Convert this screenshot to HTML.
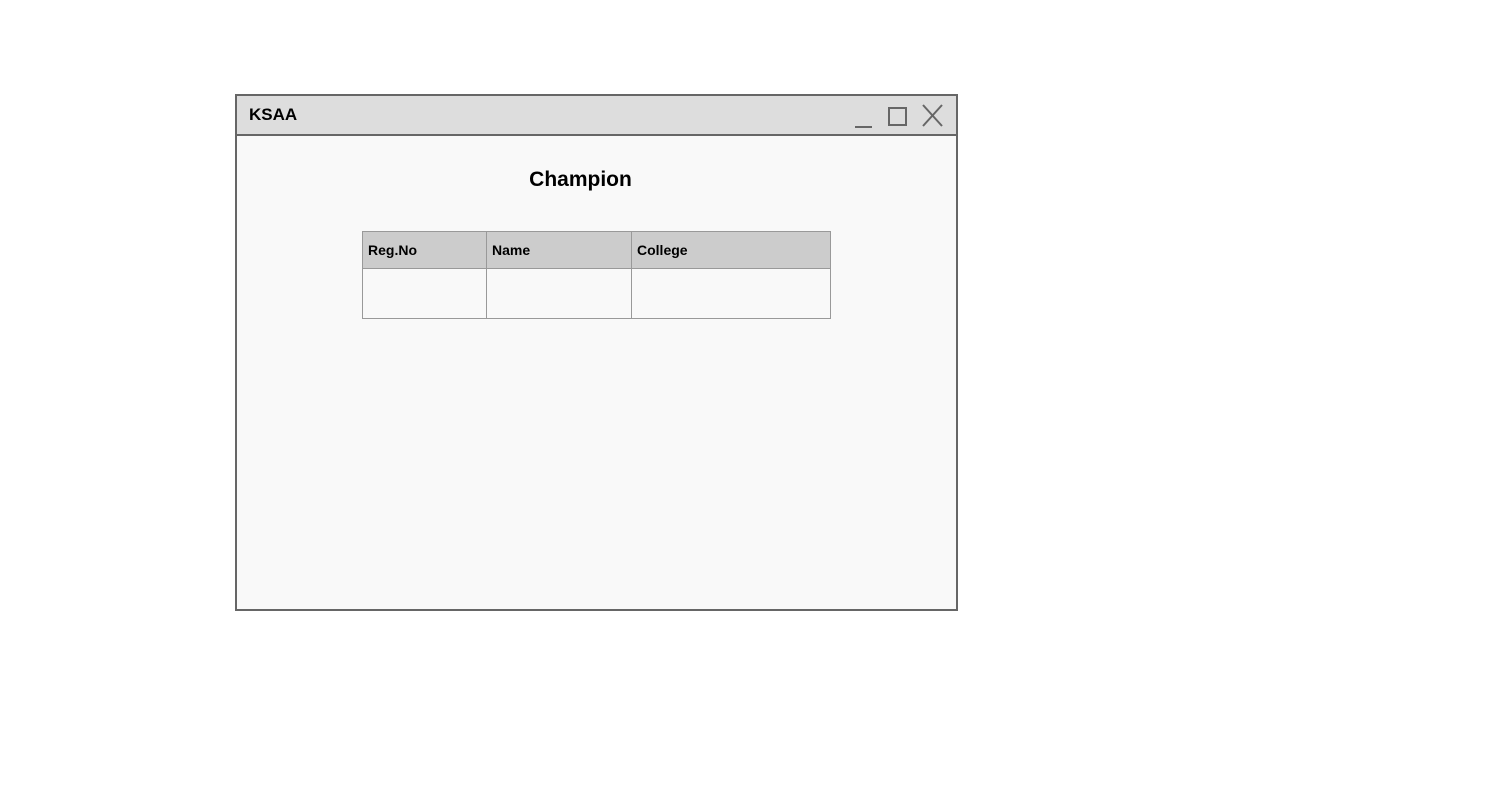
<!DOCTYPE html>
<html><head><style>
body{margin:0;width:1500px;height:800px;background:#fff;position:relative;font-family:"Liberation Sans",sans-serif;overflow:hidden}
.win{position:absolute;left:235px;top:94px;width:719px;height:513px;border:2px solid #666;background:#f9f9f9}
.tb{position:absolute;left:0;top:0;width:719px;height:38px;background:#ddd;border-bottom:2px solid #666}
.tt{position:absolute;left:12px;top:9px;font-weight:bold;font-size:17px;color:#000}
.h{position:absolute;left:0;top:72px;width:719px;text-align:center;font-weight:bold;font-size:21px;margin-left:-16px}
table{position:absolute;left:125px;top:135px;border-collapse:collapse}
td{border:1px solid #999;padding:0 5px;font-size:14px;font-weight:bold;vertical-align:middle}
tr.hd td{background:#ccc;height:36px}
tr.bd td{height:49px}
</style></head><body>
<div class="win">
<div class="tb"><div class="tt">KSAA</div>
<svg style="position:absolute;left:608px;top:3px" width="110" height="34">
<line x1="10" y1="28" x2="27" y2="28" stroke="#666" stroke-width="2"/>
<rect x="44" y="9" width="17" height="17" fill="none" stroke="#666" stroke-width="2"/>
<line x1="78" y1="6" x2="97" y2="27" stroke="#666" stroke-width="2"/>
<line x1="97" y1="6" x2="78" y2="27" stroke="#666" stroke-width="2"/>
</svg></div>
<div class="h">Champion</div>
<table>
<tr class="hd"><td style="width:113px">Reg.No</td><td style="width:134px">Name</td><td style="width:188px">College</td></tr>
<tr class="bd"><td></td><td></td><td></td></tr>
</table>
</div>
</body></html>
